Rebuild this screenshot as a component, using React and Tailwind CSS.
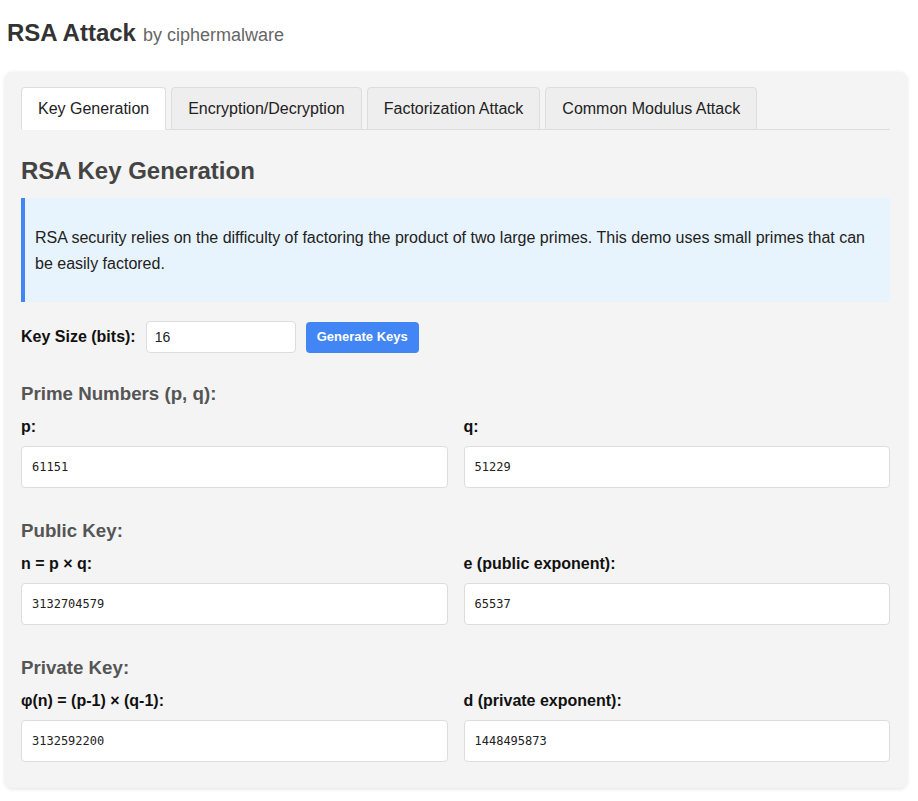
import React from "react";

const sans = { fontFamily: '"Liberation Sans", Arial, sans-serif' };

function Field({ label, value }) {
  return (
    <div className="flex flex-col">
      <div className="text-[16px] leading-[18px] font-bold text-[#111]">{label}</div>
      <div className="mt-[10px] h-[42px] bg-white border border-[#dddddd] rounded-[4px] flex items-center pl-[10px] text-[12px] text-[#222]" style={{ fontFamily: '"DejaVu Sans Mono", monospace' }}>
        {value}
      </div>
    </div>
  );
}

function Section({ title, a, b, first }) {
  return (
    <div className={first ? "mt-[30px]" : "mt-[32px]"}>
      <div className="text-[18.72px] leading-[22px] font-bold text-[#555]">{title}</div>
      <div className="mt-[13px] grid grid-cols-2 gap-4">
        <Field label={a[0]} value={a[1]} />
        <Field label={b[0]} value={b[1]} />
      </div>
    </div>
  );
}

export default function App() {
  const tabs = ["Key Generation", "Encryption/Decryption", "Factorization Attack", "Common Modulus Attack"];
  return (
    <div className="bg-white min-h-[801px] w-[918px] px-[5px]" style={sans}>
      <div className="pt-[19px] h-[72px] pl-[2px]">
        <span className="text-[24px] leading-[28px] font-bold text-[#333]">RSA Attack</span>
        <span className="text-[18px] text-[#666] ml-[7px]">by ciphermalware</span>
      </div>
      <div className="w-[902px] bg-[#f4f4f4] rounded-[8px] shadow-[0_1px_4px_rgba(0,0,0,0.12)] pt-[15px] pb-[26px] pl-4 pr-[17px]">
        <div className="flex gap-[5px] border-b border-[#dddddd]">
          {tabs.map((t, i) => (
            <div
              key={t}
              className={
                "h-[43px] px-4 flex items-center text-[16px] text-[#222] border border-[#dddddd] rounded-t-[4px] -mb-px " +
                (i === 0 ? "bg-white border-b-white" : "bg-[#eeeeee]")
              }
            >
              {t}
            </div>
          ))}
        </div>
        <div className="mt-[27px] text-[24px] leading-[28px] font-bold text-[#444]">RSA Key Generation</div>
        <div className="mt-[13px] bg-[#e8f4fd] border-l-4 border-[#4285f4] pl-[10px] pr-[10px] pt-[27px] pb-[25px] text-[16px] leading-[26px] text-[#222]">
          RSA security relies on the difficulty of factoring the product of two large primes. This demo uses small primes that can be easily factored.
        </div>
        <div className="mt-[19px] flex items-center h-[32px]">
          <span className="text-[16px] font-bold text-[#111]">Key Size (bits):</span>
          <div className="ml-[10px] w-[150px] h-[32px] bg-white border border-[#dddddd] rounded-[4px] flex items-center pl-[8px] text-[14px] text-[#222]">16</div>
          <div className="ml-[10px] h-[31px] px-[11px] bg-[#4285f4] rounded-[4px] flex items-center text-[13px] font-bold text-white">Generate Keys</div>
        </div>
        <Section first title="Prime Numbers (p, q):" a={["p:", "61151"]} b={["q:", "51229"]} />
        <Section title="Public Key:" a={["n = p × q:", "3132704579"]} b={["e (public exponent):", "65537"]} />
        <Section title="Private Key:" a={["φ(n) = (p-1) × (q-1):", "3132592200"]} b={["d (private exponent):", "1448495873"]} />
      </div>
    </div>
  );
}
